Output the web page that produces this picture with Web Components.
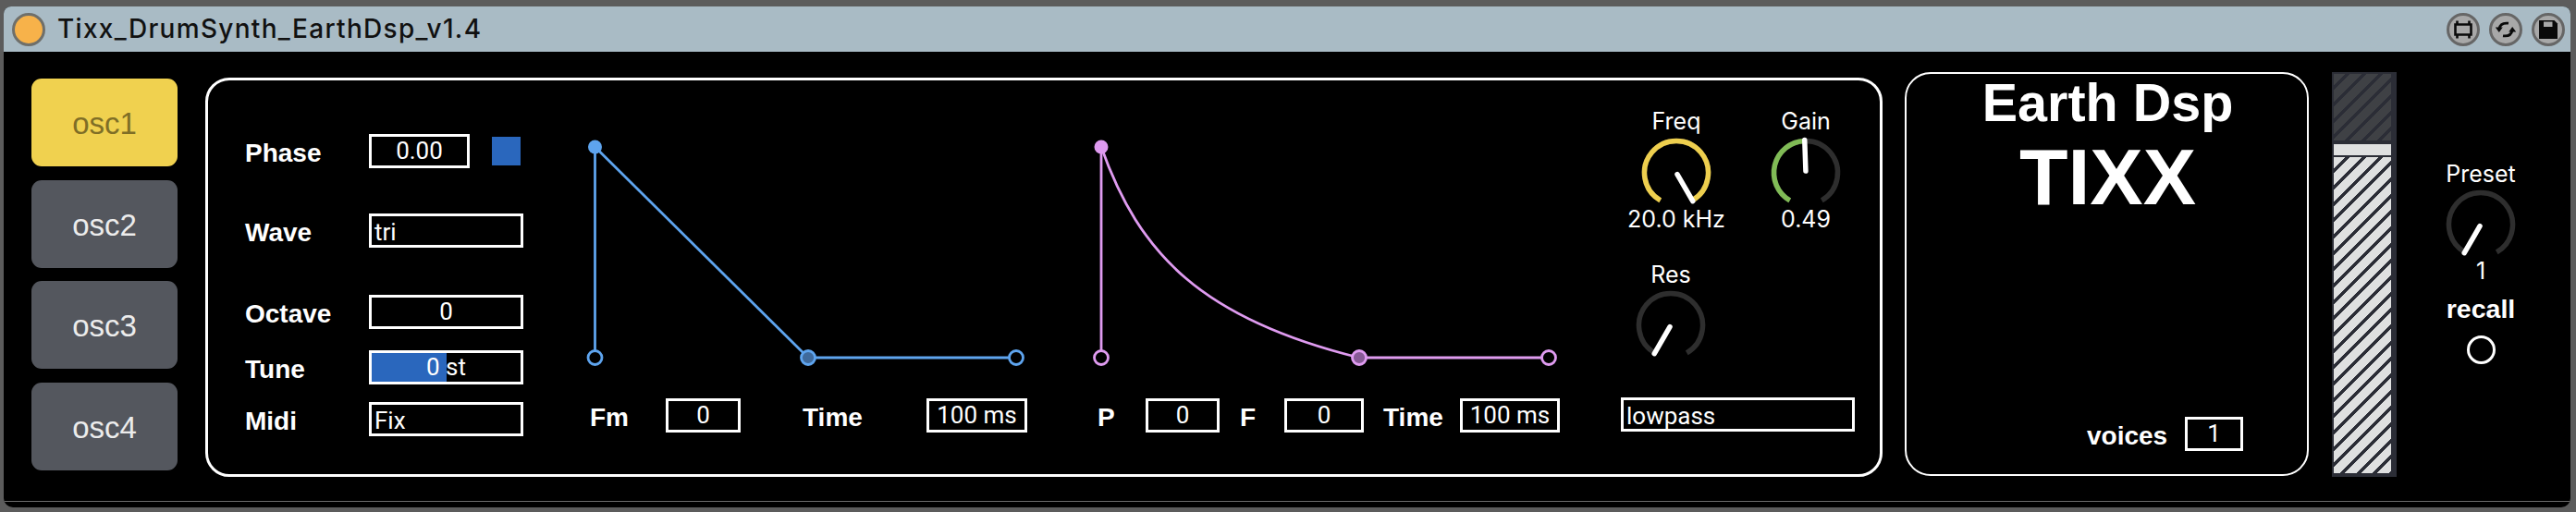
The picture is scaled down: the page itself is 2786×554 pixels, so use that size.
<!DOCTYPE html>
<html>
<head>
<meta charset="utf-8">
<style>
  html, body { margin: 0; padding: 0; background: #5c5c5c; }
  body { width: 2786px; height: 554px; overflow: hidden; font-family: Roboto, "Liberation Sans", sans-serif; color: #fff; }
</style>
</head>
<body>
<drum-device>
  <title-bar slot="title" name="Tixx_DrumSynth_EarthDsp_v1.4"></title-bar>

  <osc-column slot="osc">
    <osc-button active>osc1</osc-button>
    <osc-button>osc2</osc-button>
    <osc-button>osc3</osc-button>
    <osc-button>osc4</osc-button>
  </osc-column>

  <main-panel slot="main">
    <!-- parametri oscillatore -->
    <osc-params slot="params">
      <param-row label="Phase" top="0" w="109" ta="center" text="0.00" square></param-row>
      <param-row label="Wave" top="49" w="167" text="tri"></param-row>
      <param-row label="Octave" top="51" w="167" ta="center" text="0"></param-row>
      <param-row label="Tune" top="23" w="167" ta="center" text="0 st" fill="50"></param-row>
      <param-row label="Midi" top="19" w="167" text="Fix"></param-row>
    </osc-params>

    <env-block slot="env1" color="#5ea4ee" dim="#3f6a9c" left="13.5" mid="244" end="469" width="550">
      <param-pair label="Fm" lw="82" w="81" ml="8" text="0"></param-pair>
      <param-pair label="Time" lw="134" w="109" ml="67" text="100 ms"></param-pair>
    </env-block>

    <env-block slot="env2" color="#df9bf0" dim="#875a96" left="11" mid="290" end="495" width="560" curve="M11 14 C52 130 120 200 290 242">
      <param-pair label="P" lw="52" w="80" ml="7" text="0"></param-pair>
      <param-pair label="F" lw="48" w="86" ml="22" text="0"></param-pair>
      <param-pair label="Time" lw="83" w="108" ml="21" text="100 ms"></param-pair>
    </env-block>

    <filter-section slot="filter">
      <dial-knob slot="top" lift label="Freq" value="20.0 kHz" angle="150" color="#eecf4e" size="140"></dial-knob>
      <dial-knob slot="top" lift label="Gain" value="0.49" angle="-2" color="#80bb56" size="140"></dial-knob>
      <dial-knob slot="res" label="Res" angle="-150" color="#eecf4e" size="140"></dial-knob>
      <num-box slot="type" text="lowpass" w="253"></num-box>
    </filter-section>
  </main-panel>

  <logo-panel slot="logo" brand="Earth Dsp" product="TIXX">
    <param-pair label="voices" lw="106" w="63" text="1"></param-pair>
  </logo-panel>

  <hatch-slider slot="slider"></hatch-slider>

  <preset-section slot="preset">
    <dial-knob label="Preset" value="1" angle="-150" color="#eecf4e" size="182"></dial-knob>
  </preset-section>
</drum-device>

<script>
// ---- helpers ----
function define(name, css, html, extra) {
  const cls = class extends HTMLElement {
    constructor() {
      super();
      this.attachShadow({ mode: 'open' });
    }
    connectedCallback() {
      const a = (k, d) => this.hasAttribute(k) ? this.getAttribute(k) : d;
      this.shadowRoot.innerHTML = `<style>${css}</style>${typeof html === 'function' ? html(a, this) : html}`;
      if (extra) extra(this, a);
    }
  };
  customElements.define(name, cls);
}

function polar(cx, cy, r, deg) {
  const t = deg * Math.PI / 180;
  return [(cx + r * Math.sin(t)).toFixed(2), (cy - r * Math.cos(t)).toFixed(2)];
}

function arc(cx, cy, r, from, to) {
  const [x1, y1] = polar(cx, cy, r, from);
  const [x2, y2] = polar(cx, cy, r, to);
  return `M${x1} ${y1} A${r} ${r} 0 ${to - from > 180 ? 1 : 0} 1 ${x2} ${y2}`;
}

const LABEL = `font: 700 28px/37px "Liberation Sans", Arial, sans-serif; color: #fff; position: relative; top: 2px; text-align: left;`;

// ---- device shell ----
define('drum-device', `
  :host { display: flex; flex-direction: column; width: 2776px; height: 542px; margin: 7px 0 0 4px; background: #000; border-radius: 8px 8px 10px 10px; overflow: hidden; position: relative; }
  .body { display: flex; align-items: flex-start; padding: 22px 0 0 30px; flex: 1; border-bottom: 1px solid #6c6c6c; margin-bottom: 6px; }
  .osc { display: block; margin-top: 7px; }
  .main { display: block; margin-left: 30px; margin-top: 6px; }
  .logo { display: block; margin-left: 24px; }
  .slider { display: block; margin-left: 25px; }
`, `
  <slot name="title"></slot>
  <div class="body">
    <div class="osc"><slot name="osc"></slot></div>
    <div class="main"><slot name="main"></slot></div>
    <div class="logo"><slot name="logo"></slot></div>
    <div class="slider"><slot name="slider"></slot></div>
    <slot name="preset"></slot>
  </div>
`);

// ---- title bar ----
define('title-bar', `
  :host { display: flex; align-items: center; height: 49px; background: #a9bbc5; padding: 0 6px 0 9px; box-sizing: border-box; }
  .led { width: 36px; height: 36px; box-sizing: border-box; border-radius: 50%; background: #f7b24a; border: 3px solid #6f6f6a; }
  .name { font: 500 28px/49px Inter, Roboto, sans-serif; color: #111; margin-left: 13px; letter-spacing: 1.3px; flex: 1; }
  .btns { display: flex; gap: 10px; }
  .btn { width: 36px; height: 36px; display: block; }
`, (a) => `
  <div class="led"></div>
  <div class="name">${a('name', '')}</div>
  <div class="btns">
    <svg class="btn" viewBox="0 0 36 36"><circle cx="18" cy="18" r="16.5" fill="#a8a8a8" stroke="#666" stroke-width="3"/>
      <path d="M9.5 12.5h17v11h-17z M11.5 8.5v4 M24.5 8.5v4 M11.5 23.5v4 M24.5 23.5v4" fill="none" stroke="#0a0a0a" stroke-width="2.6"/></svg>
    <svg class="btn" viewBox="0 0 36 36"><circle cx="18" cy="18" r="16.5" fill="#a8a8a8" stroke="#666" stroke-width="3"/>
      <path d="M11 17c.8-4.5 4.500-6.500 10-5.800 M25 19c-.8 4.500-4.500 6.500-10 5.800" fill="none" stroke="#0a0a0a" stroke-width="2.8"/>
      <path d="M6.800 15.500h8l-4 5.500z M21.200 20.500h8l-4-5.500z" fill="#0a0a0a"/></svg>
    <svg class="btn" viewBox="0 0 36 36"><circle cx="18" cy="18" r="16.5" fill="#a8a8a8" stroke="#666" stroke-width="3"/>
      <path d="M8 8h16.500l3.500 3.500V28H8z" fill="#0a0a0a"/><rect x="13" y="9.500" width="9.500" height="5.500" fill="#a8a8a8"/></svg>
  </div>
`);

// ---- oscillator buttons ----
define('osc-column', `:host { display: flex; flex-direction: column; gap: 14.5px; }`, `<slot></slot>`);

define('osc-button', `
  :host { display: flex; align-items: center; justify-content: center; width: 158px; height: 95px; box-sizing: border-box; padding-top: 3px; border-radius: 11px; background: #54575e; color: #ececec; font: 400 33px "Liberation Sans", Arial, sans-serif; }
  :host([active]) { background: #f0d14f; color: #7f6e26; }
`, `<slot></slot>`);

// ---- panel ----
define('main-panel', `
  :host { display: flex; width: 1814px; height: 432px; box-sizing: border-box; border: 3px solid #fff; border-radius: 26px; }
  .params { display: block; width: 405px; padding: 58px 0 0 40px; box-sizing: border-box; }
`, `
  <div class="params"><slot name="params"></slot></div>
  <slot name="env1"></slot>
  <slot name="env2"></slot>
  <slot name="filter"></slot>
`);

define('osc-params', `:host { display: block; }`, `<slot></slot>`);

// ---- riga parametro ----
define('param-row', `
  :host { display: flex; align-items: center; height: 37px; }
  .label { width: 134px; ${LABEL} }
  .sq { width: 31px; height: 31px; background: #2a67bd; margin-left: 24px; }
`, (a) => `
  <div class="label">${a('label', '')}</div>
  <num-box text="${a('text', '')}" w="${a('w', '100')}" ta="${a('ta', 'left')}" ${a('fill') ? `fill="${a('fill')}"` : ''}></num-box>
  ${a('square') !== undefined && a('square') !== null ? '<div class="sq"></div>' : ''}
`, (el, a) => { el.style.marginTop = a('top', '0') + 'px'; });

// ---- label + box, riga in basso ----
define('param-pair', `
  :host { display: flex; align-items: center; height: 37px; }
  .label { ${LABEL} }
`, (a) => `
  <div class="label" style="width:${a('lw', '50')}px">${a('label', '')}</div>
  <num-box text="${a('text', '')}" w="${a('w', '80')}" ta="center"></num-box>
`, (el, a) => { el.style.marginLeft = a('ml', '0') + 'px'; });

// ---- numero / menu box ----
define('num-box', `
  :host { display: block; height: 37px; box-sizing: border-box; border: 3px solid #fff; position: relative; font: 400 26px/31px Roboto, "Liberation Sans", sans-serif; color: #fff; background: #000; }
  .fill { position: absolute; left: 0; top: 0; bottom: 0; background: #2a67bd; }
  .txt { position: relative; padding: 0 3px; white-space: pre; }
  .menu { top: 2px; }
`, (a) => `
  ${a('fill') ? `<div class="fill" style="width:${a('fill')}%"></div>` : ''}
  <div class="txt ${a('ta', 'left') === 'left' ? 'menu' : ''}" style="text-align:${a('ta', 'left')}">${a('text', '')}</div>
`, (el, a) => { el.style.width = a('w', '80') + 'px'; });

// ---- inviluppo ----
define('env-block', `
  :host { display: block; padding-top: 58px; box-sizing: border-box; }
  svg { display: block; overflow: visible; }
  .row { display: flex; margin-top: 31px; }
`, (a) => {
  const c = a('color', '#fff');
  const L = +a('left', 10), M = +a('mid', 200), E = +a('end', 400);
  const T = 14, B = 242;
  const curve = a('curve', `M${L} ${T} L${M} ${B}`);
  return `
  <svg width="${a('width', 500)}" height="255">
    <g fill="none" stroke="${c}" stroke-width="2.800">
      <path d="M${L} ${T} V${B}"/>
      <path d="${curve}"/>
      <path d="M${M} ${B} H${E}"/>
    </g>
    <circle cx="${L}" cy="${T}" r="7.500" fill="${c}"/>
    <circle cx="${L}" cy="${B}" r="7.500" fill="#000" stroke="${c}" stroke-width="2.800"/>
    <circle cx="${M}" cy="${B}" r="7.500" fill="${a('dim', c)}" stroke="${c}" stroke-width="2.800"/>
    <circle cx="${E}" cy="${B}" r="7.500" fill="#000" stroke="${c}" stroke-width="2.800"/>
  </svg>
  <div class="row"><slot></slot></div>`;
}, (el, a) => { el.style.width = a('width', '500') + 'px'; });

// ---- manopola ----
define('dial-knob', `
  :host { display: flex; flex-direction: column; align-items: center; flex: none; }
  .label { font: 400 25px/30px Inter, Roboto, sans-serif; color: #fff; position: relative; }
  :host([lift]) .label { top: -1px; }
  svg { display: block; overflow: visible; }
  .value { font: 400 25px/24px Inter, Roboto, sans-serif; color: #fff; margin-top: -2px; }
`, (a) => {
  const ang = +a('angle', 0);
  const [x1, y1] = polar(40, 40, 2, ang);
  const [x2, y2] = polar(40, 40, 35.5, ang);
  const lit = ang > -150 ? `<path d="${arc(40, 40, 34.5, -150, ang)}" stroke="${a('color')}"/>` : '';
  return `
  <div class="label">${a('label', '')}</div>
  <svg width="80" height="80" viewBox="0 0 80 80">
    <g fill="none" stroke-width="5.500">
      <path d="${arc(40, 40, 34.5, -150, 150)}" stroke="#2e2e2e"/>
      ${lit}
    </g>
    <line x1="${x1}" y1="${y1}" x2="${x2}" y2="${y2}" stroke="#fff" stroke-width="5.500" stroke-linecap="round"/>
  </svg>
  ${a('value') ? `<div class="value">${a('value')}</div>` : ''}`;
}, (el, a) => { el.style.width = a('size', '140') + 'px'; });

// ---- filtro ----
define('filter-section', `
  :host { display: block; padding-top: 30px; box-sizing: border-box; width: 290px; }
  .top { display: flex; margin-left: 3px; }
  .res { margin-top: 33px; margin-left: -3px; }
  .type { margin-top: 38px; margin-left: 13px; }
`, `
  <div class="top"><slot name="top"></slot></div>
  <div class="res"><slot name="res"></slot></div>
  <div class="type"><slot name="type"></slot></div>
`);

// ---- logo ----
define('logo-panel', `
  :host { display: block; width: 437px; height: 437px; box-sizing: border-box; border: 2px solid #fff; border-radius: 28px; font-family: "Liberation Sans", Arial, sans-serif; text-align: center; }
  .brand { font-weight: 700; font-size: 57.5px; line-height: 62px; margin: 0 0 0 2px; color: #fff; }
  .product { font-weight: 700; font-size: 86px; line-height: 94px; margin: 2px 0 0 2px; color: #fff; }
  .foot { display: flex; justify-content: flex-end; margin: 213px 69px 0 0; }
`, (a) => `
  <div class="brand">${a('brand', '')}</div>
  <div class="product">${a('product', '')}</div>
  <div class="foot"><slot></slot></div>
`);

// ---- slider tratteggiato ----
define('hatch-slider', `
  :host { display: flex; flex-direction: column; width: 70px; height: 438px; box-sizing: border-box; background: #2b2d36; padding: 2px 6px 4px 2px; }
  .top { height: 72px; background: repeating-linear-gradient(135deg, #3f4145 0 9px, #2b2d36 9px 12.5px); }
  .handle { height: 12px; margin-top: 4px; background: #dfe0e0; }
  .low { flex: 1; margin-top: 2px; background: repeating-linear-gradient(135deg, #dfe0e0 0 9px, #2b2d36 9px 12.5px); }
`, `<div class="top"></div><div class="handle"></div><div class="low"></div>`);

// ---- preset ----
define('preset-section', `
  :host { display: flex; flex-direction: column; align-items: center; width: 182px; padding-top: 95px; flex: none; }
  .recall { font: 700 28.500px/30px "Liberation Sans", Arial, sans-serif; margin-top: 14px; color: #fff; }
  .dot { width: 31px; height: 31px; box-sizing: border-box; border: 3px solid #fff; border-radius: 50%; margin-top: 14px; }
`, `<slot></slot><div class="recall">recall</div><div class="dot"></div>`);
</script>
</body>
</html>
